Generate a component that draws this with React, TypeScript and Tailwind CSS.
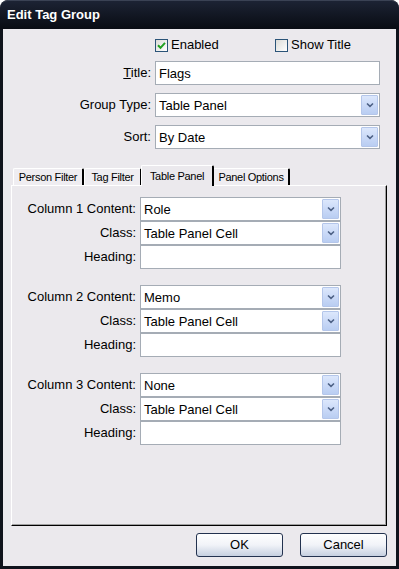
import React from 'react';

const font = { fontFamily: '"Liberation Sans", Arial, sans-serif' };

function Checkbox({ checked, label }: { checked: boolean; label: string }) {
  return (
    <div className="flex items-center">
      <div className="w-[13px] h-[13px] border border-[#2b5478] bg-gradient-to-br from-[#dcdcd8] to-white flex items-center justify-center">
        {checked && (
          <svg width="9" height="9" viewBox="0 0 9 9">
            <path d="M1 4.2 L3.5 6.8 L8 1.8" stroke="#21a121" strokeWidth="2" fill="none" />
          </svg>
        )}
      </div>
      <span className="ml-[3px] text-[13px] text-black">{label}</span>
    </div>
  );
}

function Select({ value, width }: { value: string; width: string }) {
  return (
    <div className={`${width} h-[24px] bg-white border border-[#a5acb5] flex items-center relative`}>
      <span className="pl-[3px] pt-[1px] text-[13px] text-black">{value}</span>
      <div className="absolute right-[1px] top-[1px] bottom-[1px] w-[17px] border border-[#b4c6ea] rounded-[1px] bg-gradient-to-b from-[#dce7fc] to-[#b9cdf2] flex items-center justify-center">
        <svg width="8" height="6" viewBox="0 0 8 6">
          <path d="M1 1.5 L4 4.3 L7 1.5" stroke="#4d6185" strokeWidth="1.6" fill="none" />
        </svg>
      </div>
    </div>
  );
}

function TextInput({ value, width }: { value: string; width: string }) {
  return (
    <div className={`${width} h-[24px] bg-white border border-[#a5acb5] flex items-center`}>
      <span className="pl-[3px] pt-[1px] text-[13px] text-black">{value}</span>
    </div>
  );
}

function TopRow({ label, children }: { label: React.ReactNode; children: React.ReactNode }) {
  return (
    <div className="flex items-center">
      <div className="w-[148px] text-right text-[13px] text-black">{label}</div>
      <div className="ml-[4px]">{children}</div>
    </div>
  );
}

function ColumnGroup({ n, content }: { n: number; content: string }) {
  const rows: [string, React.ReactNode][] = [
    [`Column ${n} Content:`, <Select value={content} width="w-[201px]" />],
    ['Class:', <Select value="Table Panel Cell" width="w-[201px]" />],
    ['Heading:', <TextInput value="" width="w-[201px]" />],
  ];
  return (
    <div className="flex flex-col">
      {rows.map(([label, field]) => (
        <div key={label} className="flex items-center h-[24px]">
          <div className="w-[124px] text-right text-[13px] text-black">{label}</div>
          <div className="ml-[4px]">{field}</div>
        </div>
      ))}
    </div>
  );
}

const tabs = [
  { name: 'Person Filter', w: 'w-[71px]' },
  { name: 'Tag Filter', w: 'w-[58px]' },
  { name: 'Table Panel', w: 'w-[73px]', active: true },
  { name: 'Panel Options', w: 'w-[77px]' },
];

export default function App() {
  return (
    <div style={font} className="w-[399px] h-[569px] bg-[#0f131c] rounded-t-[8px] flex flex-col overflow-hidden">
      <div className="h-[29px] shrink-0 rounded-t-[8px] bg-gradient-to-b from-[#1c2334] to-[#090c13] border-t border-[#3a4254] flex items-center pl-[7px]">
        <span className="text-white font-bold text-[13px]">Edit Tag Group</span>
      </div>
      <div className="flex-1 mx-[3px] mb-[3px] bg-[#ebe9ed] flex flex-col">
        <div className="pt-[8px] flex flex-col">
          <TopRow label="">
            <div className="flex h-[16px] items-center">
              <div className="w-[120px]"><Checkbox checked label="Enabled" /></div>
              <Checkbox checked={false} label="Show Title" />
            </div>
          </TopRow>
          <div className="mt-[8px]">
            <TopRow label={<><span className="underline">T</span>itle:</>}>
              <TextInput value="Flags" width="w-[225px]" />
            </TopRow>
          </div>
          <div className="mt-[8px]">
            <TopRow label="Group Type:">
              <Select value="Table Panel" width="w-[225px]" />
            </TopRow>
          </div>
          <div className="mt-[8px]">
            <TopRow label="Sort:">
              <Select value="By Date" width="w-[225px]" />
            </TopRow>
          </div>
        </div>

        <div className="ml-[8px] mt-[17px] flex flex-col">
          <div className="flex items-end h-[20px] pl-[2px] -mb-[1px]">
            {tabs.map((t) =>
              t.active ? (
                <div
                  key={t.name}
                  className={`${t.w} h-[21px] relative -mx-[1px] bg-[#ebe9ed] border-l border-t border-white border-r-2 border-r-black rounded-t-[2px] flex items-start justify-center pt-[2px] text-[11px] tracking-[-0.3px] text-black whitespace-nowrap`}
                >
                  {t.name}
                </div>
              ) : (
                <div
                  key={t.name}
                  className={`${t.w} h-[18px] bg-[#efedf1] border-l border-t border-white border-r-2 border-r-black rounded-t-[2px] flex items-center justify-center text-[11px] tracking-[-0.3px] text-black whitespace-nowrap`}
                >
                  {t.name}
                </div>
              )
            )}
          </div>
          <div className="w-[376px] h-[341px] bg-[#ebe9ed] border-l border-t border-white border-r border-b border-r-black border-b-black shadow-[inset_-1px_-1px_0_#a0a0a0] pt-[11px] flex flex-col gap-[16px]">
            <ColumnGroup n={1} content="Role" />
            <ColumnGroup n={2} content="Memo" />
            <ColumnGroup n={3} content="None" />
          </div>
        </div>

        <div className="flex justify-end gap-[17px] pr-[9px] mt-[7px]">
          {['OK', 'Cancel'].map((b) => (
            <div
              key={b}
              className="w-[87px] h-[24px] border border-[#23324f] rounded-[3px] bg-gradient-to-b from-white via-[#f1f3f8] to-[#c6d0e0] flex items-center justify-center text-[13px] text-black"
            >
              {b}
            </div>
          ))}
        </div>
      </div>
    </div>
  );
}
